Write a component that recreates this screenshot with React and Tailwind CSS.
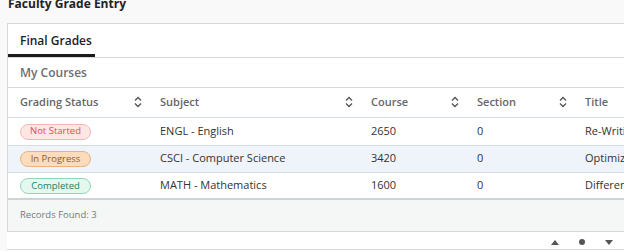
import React from "react";

const columns = [
  { label: "Grading Status", width: "w-[140px]" },
  { label: "Subject", width: "w-[211px]" },
  { label: "Course", width: "w-[106px]" },
  { label: "Section", width: "w-[108px]" },
  { label: "Title", width: "w-[150px]" },
];

const rows = [
  {
    status: "Not Started",
    badge: "bg-[#fde6e4] border-[#f5b9b4] text-[#d9534f]",
    subject: "ENGL - English",
    course: "2650",
    section: "0",
    title: "Re-Writing Fiction",
  },
  {
    status: "In Progress",
    badge: "bg-[#fcdcbc] border-[#eab183] text-[#8f5d23]",
    subject: "CSCI - Computer Science",
    course: "3420",
    section: "0",
    title: "Optimization",
  },
  {
    status: "Completed",
    badge: "bg-[#e5f8f0] border-[#93d6b8] text-[#23805a]",
    subject: "MATH - Mathematics",
    course: "1600",
    section: "0",
    title: "Differential Equations",
  },
];

function SortIcon() {
  return (
    <svg width="8" height="12" viewBox="0 0 8 12" fill="none" stroke="#555" strokeWidth="1.4">
      <path d="M1 4.5 L4 1.5 L7 4.5" />
      <path d="M1 7.5 L4 10.5 L7 7.5" />
    </svg>
  );
}

export default function App() {
  return (
    <div
      className="h-[251px] w-[624px] overflow-hidden bg-[#f9f9f9] text-[#333]"
      style={{ fontFamily: '"Open Sans", "Liberation Sans", sans-serif' }}
    >
      <div className="h-[23px] pl-2">
        <h1 className="-translate-y-[3px] text-[12px] font-bold leading-[14px] text-[#222]">
          Faculty Grade Entry
        </h1>
      </div>

      <div className="ml-[7px] w-[717px] border border-[#d6d9db] bg-white">
        <div className="flex h-[34px] border-b border-[#d6d9db]">
          <div className="flex w-[87px] flex-col">
            <span className="flex-1 pl-3 pt-[8px] text-[12px] font-semibold text-[#222]">
              Final Grades
            </span>
            <div className="h-[3px] bg-[#1b1b1b]" />
          </div>
        </div>

        <div className="flex h-[30px] items-center border-b border-[#d6d9db] pl-3 text-[12px] font-semibold text-[#6e6e6e]">
          My Courses
        </div>

        <table className="w-[715px] table-fixed border-collapse text-[11px]">
          <thead>
            <tr className="h-[29px] border-b border-[#d6dde3]">
              {columns.map((col) => (
                <th key={col.label} className={`${col.width} pl-3 pr-[6px] text-left font-semibold text-[#666]`}>
                  <div className="flex items-center justify-between">
                    <span>{col.label}</span>
                    {col.label !== "Title" && <SortIcon />}
                  </div>
                </th>
              ))}
            </tr>
          </thead>
          <tbody>
            {rows.map((row, i) => (
              <tr
                key={row.subject}
                className={`${i === 0 ? "h-[28px]" : "h-[27px]"} ${i === 2 ? "border-b-2 border-[#cfd3d6]" : "border-b border-[#d6dde3]"} ${i === 1 ? "bg-[#eef4fa]" : "bg-white"}`}
              >
                <td className="pl-3">
                  <span
                    className={`inline-flex h-[16px] w-[71px] items-center justify-center rounded-full border text-[9.5px] ${row.badge}`}
                  >
                    {row.status}
                  </span>
                </td>
                <td className="pl-3 whitespace-nowrap">{row.subject}</td>
                <td className="pl-3">{row.course}</td>
                <td className="pl-3">{row.section}</td>
                <td className="pl-3 whitespace-nowrap">{row.title}</td>
              </tr>
            ))}
          </tbody>
        </table>

        <div className="flex h-[31px] items-center bg-[#f5f7f7] pl-3 text-[9.5px] text-[#777]">
          Records Found: 3
        </div>
      </div>

      <div className="ml-[7px] flex h-[18px] items-end justify-end gap-[20px] border-b border-[#dcdcdc] bg-white pb-[4px] pr-[11px] text-[#555]">
        <svg width="8" height="5" viewBox="0 0 8 5"><path d="M0 5 L4 0 L8 5 Z" fill="#555" /></svg>
        <svg width="6" height="6" viewBox="0 0 6 6"><circle cx="3" cy="3" r="3" fill="#555" /></svg>
        <svg width="8" height="5" viewBox="0 0 8 5"><path d="M0 0 L4 5 L8 0 Z" fill="#555" /></svg>
      </div>
    </div>
  );
}
